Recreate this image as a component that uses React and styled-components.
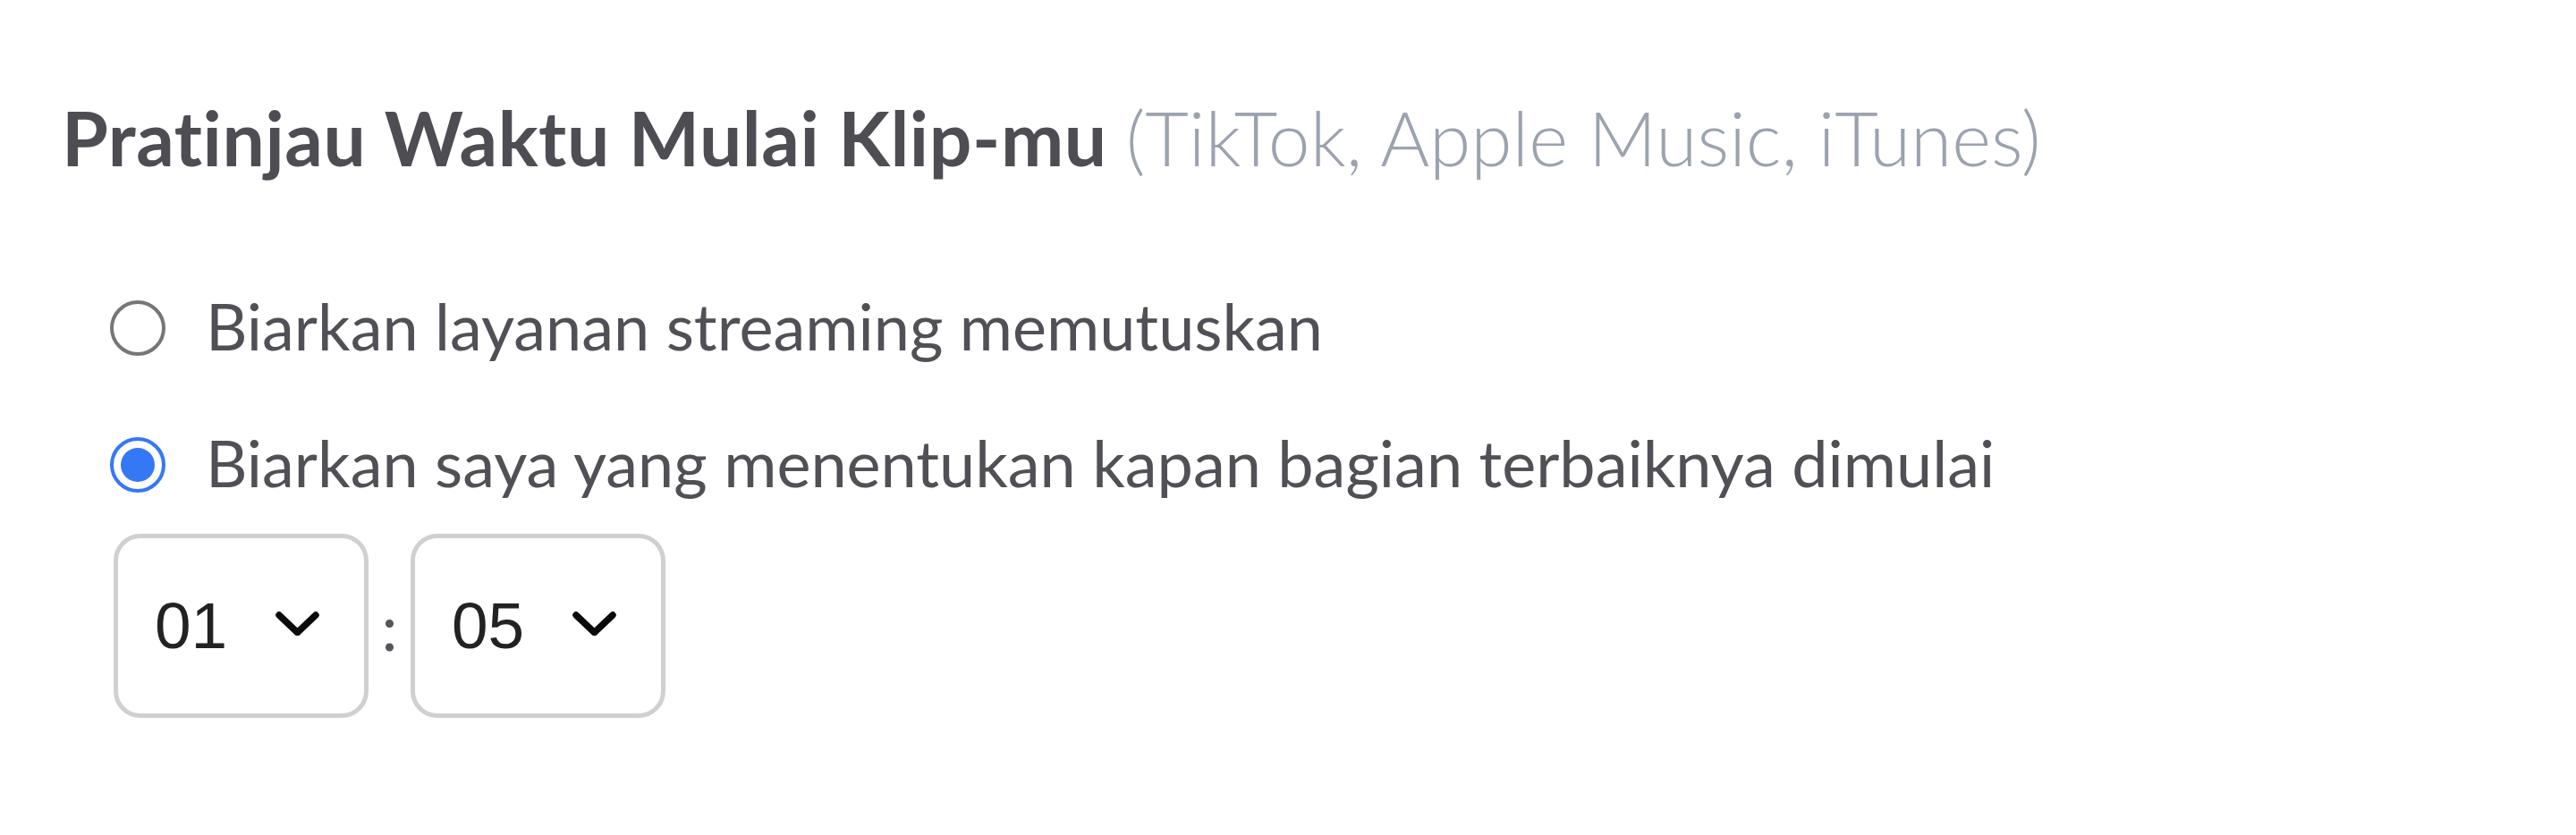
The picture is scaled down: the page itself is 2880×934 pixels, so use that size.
import React, { useState } from "react";
import styled, { createGlobalStyle } from "styled-components";

const GlobalStyle = createGlobalStyle`
  html, body {
    margin: 0;
    padding: 0;
    background: #fff;
  }
  body {
    font-family: Lato, "Noto Sans", sans-serif;
    font-variant-ligatures: none;
    -webkit-font-smoothing: antialiased;
  }
`;

const Page = styled.div`
  padding: 104px 0 0 69px;
  display: flex;
  flex-direction: column;
`;

const Title = styled.h2`
  margin: 0;
  font-size: 84px;
  line-height: 1.2;
  font-weight: 700;
  letter-spacing: 0.55px;
  color: #4d4d53;
  span {
    font-weight: 300;
    letter-spacing: 0;
    color: #9ca3af;
  }
`;

const Options = styled.div`
  display: flex;
  flex-direction: column;
  gap: 67px;
  margin-top: 116px;
`;

const Option = styled.label`
  display: flex;
  align-items: flex-start;
  gap: 45px;
  margin-left: 54px;
  font-size: 72px;
  line-height: 1.2;
  color: #505056;
  cursor: pointer;
  input {
    display: none;
  }
`;

const Radio = styled.span`
  flex: none;
  box-sizing: border-box;
  width: 62px;
  height: 62px;
  margin-top: 15px;
  border-radius: 50%;
  border: 4px solid ${({ checked }) => (checked ? "#3478f6" : "#767676")};
  display: flex;
  align-items: center;
  justify-content: center;
  &::after {
    content: "";
    width: 38px;
    height: 38px;
    border-radius: 50%;
    background: #3478f6;
    display: ${({ checked }) => (checked ? "block" : "none")};
  }
`;

const TimeRow = styled.div`
  display: flex;
  align-items: center;
  margin: 36px 0 0 58px;
`;

const SelectBox = styled.div`
  box-sizing: border-box;
  width: 285px;
  height: 206px;
  border: 5px solid #d0d0d0;
  border-radius: 30px;
  padding-left: 41px;
  display: flex;
  align-items: center;
  background: #fff;
  font-family: "Liberation Sans", Arial, sans-serif;
  font-size: 73px;
  color: #222;
  svg {
    margin-left: 54px;
    margin-bottom: 5px;
  }
`;

const Colon = styled.span`
  width: 47px;
  text-align: center;
  font-size: 72px;
  color: #55555c;
`;

function Chevron() {
  return (
    <svg width="49" height="27" viewBox="0 0 49 27" fill="none">
      <path
        d="M4 4 L24.5 23.5 L45 4"
        stroke="#0a0a0a"
        strokeWidth="7.5"
        strokeLinecap="round"
        strokeLinejoin="round"
      />
    </svg>
  );
}

const choices = [
  { id: "auto", label: "Biarkan layanan streaming memutuskan" },
  { id: "manual", label: "Biarkan saya yang menentukan kapan bagian terbaiknya dimulai" },
];

export default function App() {
  const [mode, setMode] = useState("manual");
  return (
    <>
      <GlobalStyle />
      <Page>
        <Title>
          Pratinjau Waktu Mulai Klip-mu <span>(TikTok, Apple Music, iTunes)</span>
        </Title>
        <Options>
          {choices.map((c) => (
            <Option key={c.id}>
              <input
                type="radio"
                name="start"
                checked={mode === c.id}
                onChange={() => setMode(c.id)}
              />
              <Radio checked={mode === c.id} />
              {c.label}
            </Option>
          ))}
        </Options>
        <TimeRow>
          <SelectBox>
            01
            <Chevron />
          </SelectBox>
          <Colon>:</Colon>
          <SelectBox>
            05
            <Chevron />
          </SelectBox>
        </TimeRow>
      </Page>
    </>
  );
}
